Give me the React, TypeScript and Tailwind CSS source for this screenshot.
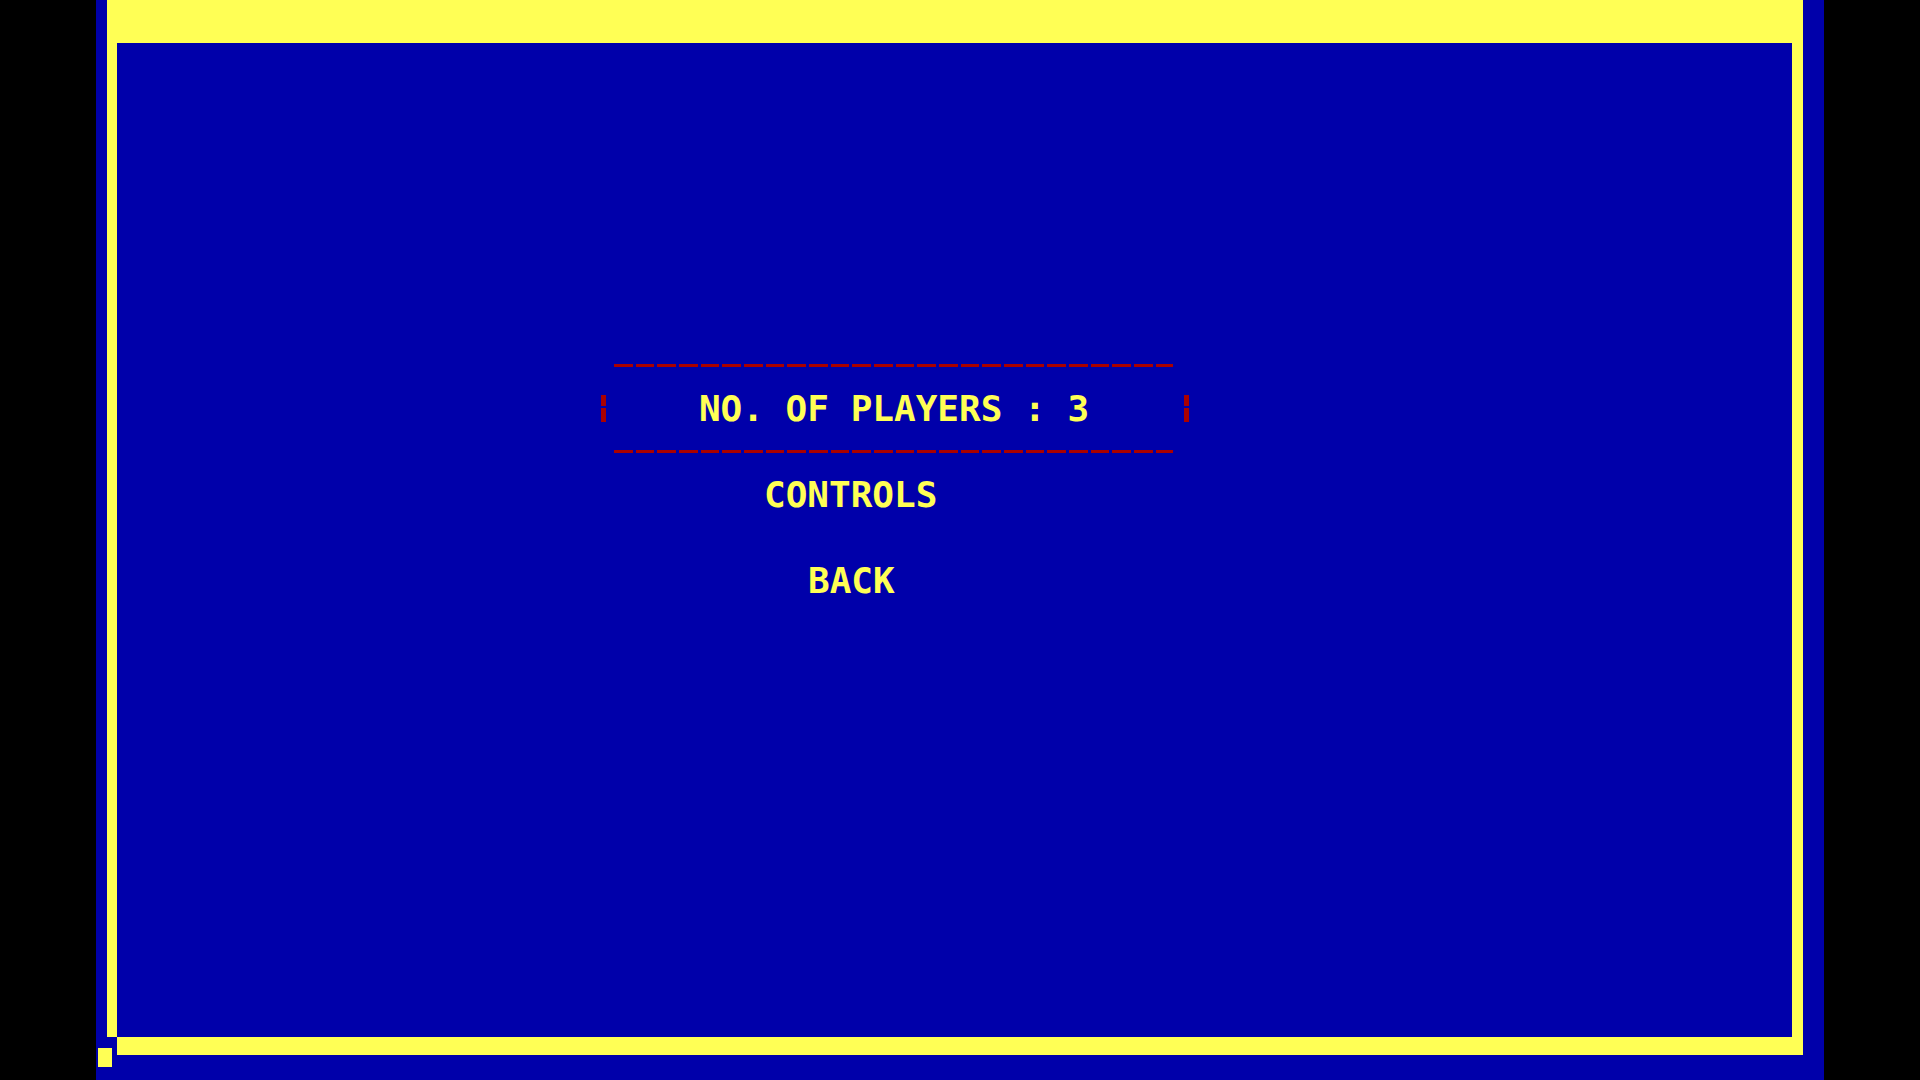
import React from 'react';

const DashRow: React.FC = () => (
  <div className="h-[43px] flex items-center pl-[13px]">
    <div className="h-[3px] w-[559px] bg-[repeating-linear-gradient(90deg,#aa0000_0px,#aa0000_18.7px,transparent_18.7px,transparent_21.67px)]" />
  </div>
);

const RedBar: React.FC = () => (
  <div className="flex flex-col w-[5px] gap-[2px]">
    <div className="h-[11px] bg-[#aa0000]" />
    <div className="h-[14px] bg-[#aa0000]" />
  </div>
);

const App: React.FC = () => {
  const menuText = "font-['DejaVu_Sans_Mono',monospace] font-bold text-[36px] leading-none text-[#ffff55] whitespace-pre";

  return (
    <div className="w-[1920px] h-[1080px] bg-black flex justify-center overflow-hidden">
      <div className="relative w-[1728px] h-full bg-[#0000aa] pl-[11px]">
        <div className="w-[1696px] flex flex-col">
          {/* top band */}
          <div className="h-[43px] bg-[#ffff55]" />
          <div className="flex h-[994px]">
            <div className="w-[10px] bg-[#ffff55]" />
            <div className="flex-1 bg-[#0000aa] pt-[301px]">
              <div className="ml-[484px] w-[588px] flex flex-col">
                <DashRow />
                <div className="h-[43px] flex items-center justify-between">
                  <RedBar />
                  <span className={menuText + ' mr-[2px]'}>NO. OF PLAYERS : 3</span>
                  <RedBar />
                </div>
                <DashRow />
                <div className="h-[43px] flex items-center pl-[163px]">
                  <span className={menuText}>CONTROLS</span>
                </div>
                <div className="h-[43px]" />
                <div className="h-[43px] flex items-center pl-[207px]">
                  <span className={menuText}>BACK</span>
                </div>
              </div>
            </div>
            <div className="w-[11px] bg-[#ffff55]" />
          </div>
          <div className="flex h-[18px]">
            <div className="w-[10px]" />
            <div className="flex-1 bg-[#ffff55]" />
          </div>
        </div>
        {/* cursor block */}
        <div className="absolute left-[2px] top-[1048px] w-[14px] h-[19px] bg-[#ffff55]" />
      </div>
    </div>
  );
};

export default App;
